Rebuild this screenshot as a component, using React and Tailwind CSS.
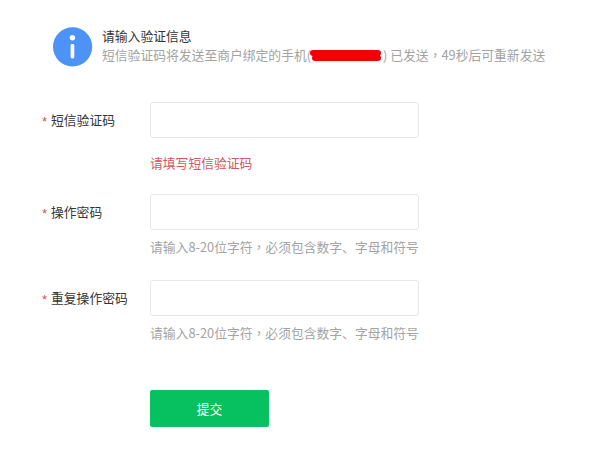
import React from 'react'

const font = "font-['Noto_Sans_CJK_SC','Liberation_Sans',sans-serif]"

// the comma sits centred in its cell in the reference, the TC face does that
const Comma = () => <span className="font-['Noto_Sans_CJK_TC']">，</span>

const passwordHint = <>请输入8-20位字符<Comma />必须包含数字、字母和符号</>

function Field({ label, hint, error, className }) {
  return (
    <div className={`flex ${className}`}>
      <label className="w-[150px] shrink-0 h-[36px] pl-[42px] flex items-center text-[12.8px] text-[#353535] whitespace-nowrap">
        <span className="w-[9px] text-[#c9555a] text-[13px] font-['Liberation_Sans'] translate-y-[2px]">*</span>
        {label}
      </label>
      <div>
        <input className="block w-[269px] h-[36px] bg-white border border-[#e7e7eb] rounded-[3px] outline-none" />
        {error && <p className="mt-[15px] h-[19px] leading-[19px] text-[12.8px] text-[#d0575b]">{error}</p>}
        {hint && <p className="mt-[7px] h-[19px] leading-[19px] text-[12.8px] text-[#a3a3a3] whitespace-nowrap">{hint}</p>}
      </div>
    </div>
  )
}

export default function App() {
  return (
    <div className={`w-[592px] h-[465px] bg-white overflow-hidden ${font}`}>
      {/* Notice */}
      <div className="flex h-[40px] mt-[27px] ml-[53px]">
        <svg width="40" height="40" viewBox="0 0 40 40" className="shrink-0">
          <circle cx="19.6" cy="19.8" r="19.6" fill="#4d92f7" />
          <circle cx="19.4" cy="10.8" r="2.7" fill="#fff" />
          <rect x="17.6" y="17" width="3.7" height="14.4" rx="1.4" fill="#fff" />
        </svg>
        <div className="ml-[9px]">
          <p className="text-[12.8px] leading-[17px] text-[#353535]">请输入验证信息</p>
          <p className="text-[12.8px] leading-[21px] text-[#a3a3a3] whitespace-nowrap">
            短信验证码将发送至商户绑定的手机(<span className="inline-block w-[72px] relative">
              <svg width="76" height="14" viewBox="0 0 76 14" className="absolute -left-[3px] -top-[11px]">
                <path d="M5 4 L70 4 M7 9 L70 9" stroke="#f50000" strokeWidth="6" strokeLinecap="round" fill="none" />
              </svg>
            </span>) 已发送<Comma />49秒后可重新发送
          </p>
        </div>
      </div>

      {/* Form */}
      <div className="mt-[35px]">
        <Field label="短信验证码" error="请填写短信验证码" />
        <Field label="操作密码" hint={passwordHint} className="mt-[22px]" />
        <Field label="重复操作密码" hint={passwordHint} className="mt-[24px]" />
        <div className="pl-[150px] mt-[48px]">
          <button className="block w-[119px] h-[37px] bg-[#07c160] rounded-[2px] text-white text-[12.8px]">提交</button>
        </div>
      </div>
    </div>
  )
}
